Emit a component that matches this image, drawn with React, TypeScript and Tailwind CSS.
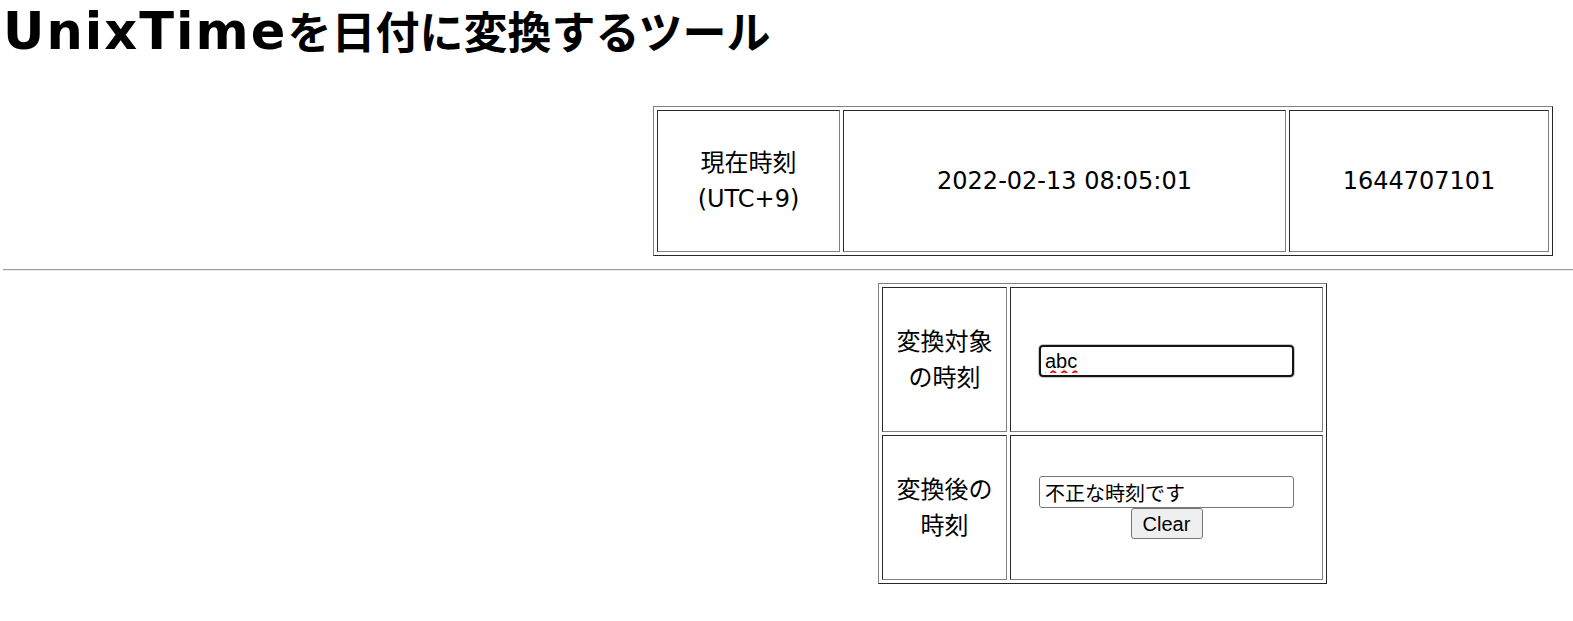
import { type FC, type ReactNode } from "react";

const cellBorder =
  "border border-t-[#2a2a2a] border-l-[#2a2a2a] border-r-[#808080] border-b-[#808080] text-center align-middle p-0";
const tableBorder =
  "border-separate border-spacing-[3px] border border-t-[#808080] border-l-[#808080] border-r-[#262626] border-b-[#262626]";

const Cell: FC<{ className?: string; children: ReactNode }> = ({ className = "", children }) => (
  <td className={`${cellBorder} ${className}`}>{children}</td>
);

const NowTable: FC = () => (
  <table className={`${tableBorder} ml-[650px] mt-[49px]`}>
    <tbody>
      <tr>
        <Cell className="w-[183px] h-[142px]">
          現在時刻
          <br />
          (UTC+9)
        </Cell>
        <Cell className="w-[443px] h-[142px]">2022-02-13 08:05:01</Cell>
        <Cell className="w-[260px] h-[142px]">1644707101</Cell>
      </tr>
    </tbody>
  </table>
);

const ConvertTable: FC = () => (
  <table className={`${tableBorder} ml-[875px]`}>
    <tbody>
      <tr>
        <Cell className="w-[125px] h-[145px] px-3">変換対象の時刻</Cell>
        <Cell className="w-[313px] h-[145px]">
          <input
            type="text"
            defaultValue="abc"
            spellCheck
            className="w-[255px] h-[32px] px-[4px] border-2 border-[#141414] rounded-[4px] text-[20px] leading-[24px] font-['Liberation_Sans','Noto_Sans_CJK_JP',sans-serif] text-black underline decoration-wavy decoration-[#ff0000] decoration-[1.5px] underline-offset-[2px] outline-none shadow-[0_0_0_1px_#c8c8c8]"
          />
        </Cell>
      </tr>
      <tr>
        <Cell className="w-[125px] h-[145px] px-3">変換後の時刻</Cell>
        <Cell className="w-[313px] h-[145px]">
          <div className="flex flex-col items-center">
            <input
              type="text"
              readOnly
              value="不正な時刻です"
              className="w-[255px] h-[32px] px-[5px] border border-[#767676] rounded-[3px] text-[20px] leading-none font-['Liberation_Sans','Noto_Sans_CJK_JP',sans-serif] text-black outline-none"
            />
            <button
              type="button"
              className="w-[72px] h-[31px] bg-[#efefef] border border-[#767676] rounded-[3px] text-[20px] leading-none font-['Liberation_Sans',sans-serif] text-black"
            >
              Clear
            </button>
          </div>
        </Cell>
      </tr>
    </tbody>
  </table>
);

export default function App() {
  return (
    <div className="min-h-screen bg-white pl-[3px] text-black text-[24px] leading-[36px] font-['DejaVu_Sans','Noto_Sans_CJK_JP',sans-serif]">
      <h1 className="pt-[2px] h-[57px] flex items-baseline font-bold leading-[57px] whitespace-nowrap">
        <span className="text-[51px] tracking-[0.04em] font-['DejaVu_Sans',sans-serif]">UnixTime</span>
        <span className="text-[44px] font-['Noto_Sans_CJK_JP',sans-serif]">を日付に変換するツール</span>
      </h1>
      <NowTable />
      <hr className="mt-[13px] mb-[12px] h-0 border-t border-b border-t-[#9a9a9a] border-b-[#eeeeee]" />
      <ConvertTable />
    </div>
  );
}
